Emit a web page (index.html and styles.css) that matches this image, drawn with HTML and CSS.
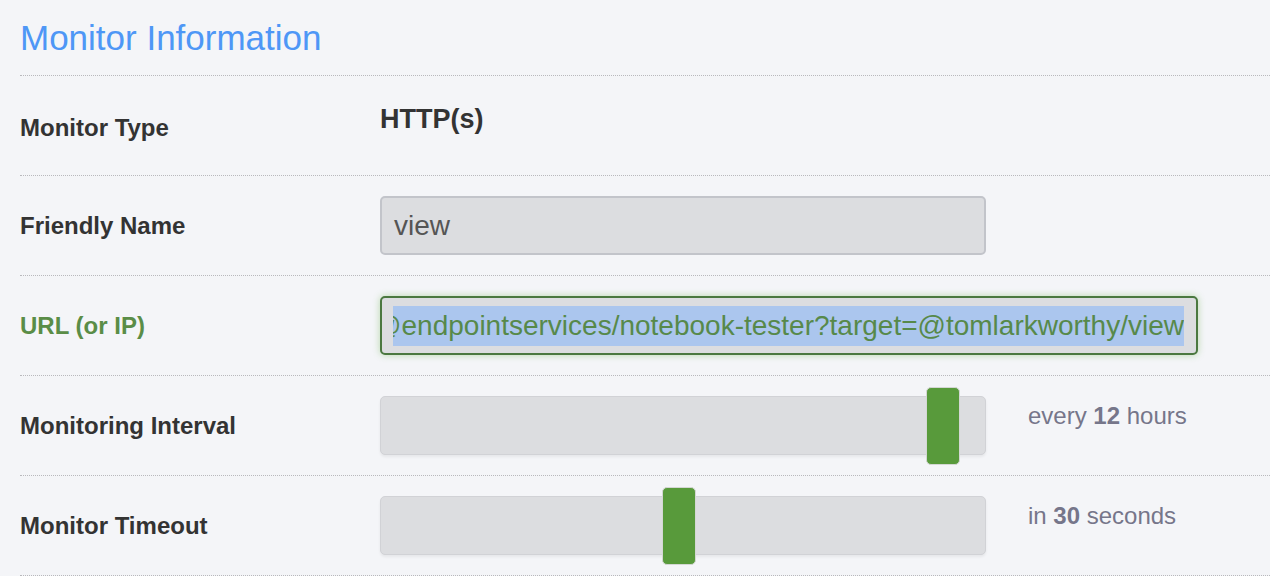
FILE: index.html
```html
<!DOCTYPE html>
<html>
<head>
<meta charset="utf-8">
<link rel="stylesheet" href="styles.css">
</head>
<body>
<div class="panel">
  <h2 class="title">Monitor Information</h2>
  <div class="row">
    <div class="label label-type">Monitor Type</div>
    <div class="control"><span class="static">HTTP(s)</span></div>
  </div>
  <div class="row">
    <div class="label">Friendly Name</div>
    <div class="control"><div class="input">view</div></div>
  </div>
  <div class="row">
    <div class="label label-ok">URL (or IP)</div>
    <div class="control"><div class="input input-ok"><div class="clip"><span class="sel">@endpointservices/notebook-tester?target=@tomlarkworthy/view</span></div></div></div>
  </div>
  <div class="row">
    <div class="label">Monitoring Interval</div>
    <div class="control">
      <div class="slider"><div class="thumb" style="left:545px"></div></div>
      <div class="note">every <b>12</b> hours</div>
    </div>
  </div>
  <div class="row">
    <div class="label">Monitor Timeout</div>
    <div class="control">
      <div class="slider"><div class="thumb" style="left:281px"></div></div>
      <div class="note">in <b>30</b> seconds</div>
    </div>
  </div>
</div>
</body>
</html>
```
FILE: styles.css
```css
html, body {
  margin: 0;
  padding: 0;
  background: #f4f5f8;
  font-family: "Liberation Sans", Arial, sans-serif;
  overflow: hidden;
}
.panel {
  padding-left: 20px;
}
.title {
  margin: 0;
  height: 76px;
  box-sizing: border-box;
  padding-top: 18px;
  font-size: 35px;
  font-weight: normal;
  line-height: 40px;
  color: #4e97f6;
  border-bottom: 1px dotted #b9b9bd;
}
.row {
  display: flex;
  align-items: center;
  height: 99px;
  border-bottom: 1px dotted #b9b9bd;
}
.label {
  width: 360px;
  flex-shrink: 0;
  font-size: 24px;
  font-weight: bold;
  color: #333333;
}
.label-type {
  position: relative;
  top: 2px;
}
.label-ok {
  color: #5a8d47;
}
.control {
  display: flex;
  align-items: center;
}
.static {
  font-size: 27px;
  font-weight: bold;
  color: #333;
  position: relative;
  top: -6px;
}
.input {
  width: 606px;
  height: 59px;
  box-sizing: border-box;
  background: #dcdde0;
  border: 2px solid #c2c4ca;
  border-radius: 5px;
  padding: 0 12px;
  font-size: 28px;
  color: #555;
  display: flex;
  align-items: center;
  white-space: nowrap;
  overflow: hidden;
}
.input-ok {
  width: 818px;
  border-color: #4b7840;
  box-shadow: 0 0 7px rgba(110, 180, 80, 0.45);
  color: #57894a;
  padding: 0 12px 0 11px;
}
.clip {
  flex: 1;
  min-width: 0;
  display: flex;
  justify-content: flex-end;
  overflow: hidden;
}
.sel {
  flex-shrink: 0;
  background: #abc6ee;
  line-height: 40px;
}
.slider {
  position: relative;
  width: 606px;
  height: 59px;
  box-sizing: border-box;
  background: #dcdde0;
  border: 1px solid #d1d2d6;
  border-radius: 5px;
  box-shadow: 0 2px 3px rgba(0, 0, 0, 0.06);
}
.thumb {
  position: absolute;
  top: -10px;
  width: 34px;
  height: 78px;
  box-sizing: border-box;
  background: #589a3b;
  border: 1px solid #d4d7d4;
  border-radius: 5px;
}
.note {
  margin-left: 42px;
  font-size: 24px;
  color: #76768a;
  position: relative;
  top: -10px;
}
.note b {
  font-weight: bold;
}
```
